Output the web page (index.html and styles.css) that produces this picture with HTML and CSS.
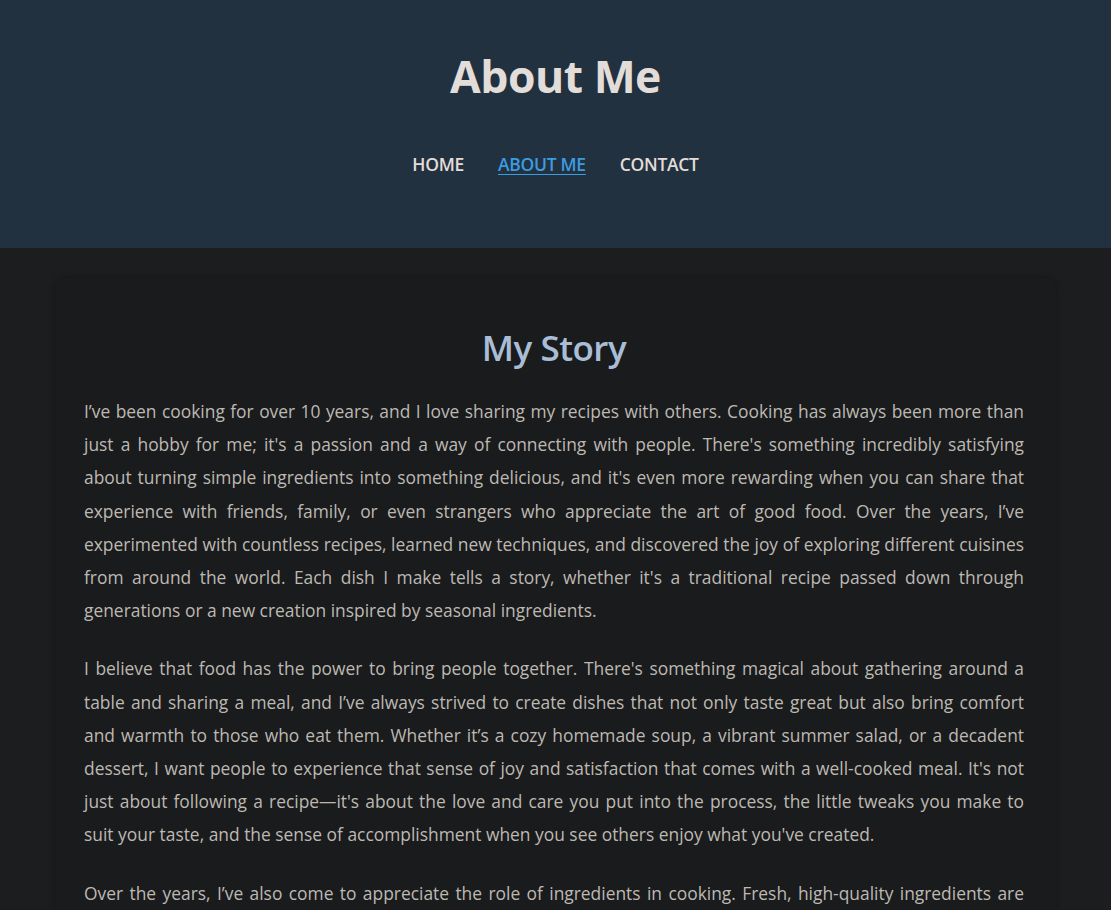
FILE: index.html
```html
<!DOCTYPE html>
<html lang="en">
<head>
<meta charset="utf-8">
<title>About Me</title>
<link rel="stylesheet" href="styles.css">
</head>
<body>
<header class="site-header">
  <h1 class="site-title">About Me</h1>
  <nav class="site-nav">
    <a href="#" class="nav-link">HOME</a>
    <a href="#" class="nav-link active">ABOUT ME</a>
    <a href="#" class="nav-link">CONTACT</a>
  </nav>
</header>
<main class="container">
  <section class="card">
    <h2 class="card-title">My Story</h2>
    <p>I’ve been cooking for over 10 years, and I love sharing my recipes with others. Cooking has always been more than just a hobby for me; it's a passion and a way of connecting with people. There's something incredibly satisfying about turning simple ingredients into something delicious, and it's even more rewarding when you can share that experience with friends, family, or even strangers who appreciate the art of good food. Over the years, I’ve experimented with countless recipes, learned new techniques, and discovered the joy of exploring different cuisines from around the world. Each dish I make tells a story, whether it's a traditional recipe passed down through generations or a new creation inspired by seasonal ingredients.</p>
    <p>I believe that food has the power to bring people together. There's something magical about gathering around a table and sharing a meal, and I’ve always strived to create dishes that not only taste great but also bring comfort and warmth to those who eat them. Whether it’s a cozy homemade soup, a vibrant summer salad, or a decadent dessert, I want people to experience that sense of joy and satisfaction that comes with a well-cooked meal. It's not just about following a recipe—it's about the love and care you put into the process, the little tweaks you make to suit your taste, and the sense of accomplishment when you see others enjoy what you've created.</p>
    <p class="wide">Over the years, I’ve also come to appreciate the role of ingredients in cooking. Fresh, high-quality ingredients are the foundation of every great dish, and I try to source them locally whenever I can. Visiting farmers' markets, talking with growers, and learning about what's in season has changed the way I plan my meals and inspired many of the recipes you'll find here.</p>
  </section>
</main>
</body>
</html>
```

FILE: styles.css
```css
* { box-sizing: border-box; }

body {
  margin: 0;
  background: #1c1d1f;
  font-family: "Open Sans", "Noto Sans", sans-serif;
  color: #bdb9b2;
}

.site-header {
  background: #22313f;
  height: 248px;
  display: flex;
  flex-direction: column;
  align-items: center;
  padding-top: 46px;
}

.site-title {
  margin: 0;
  font-size: 44.5px;
  line-height: 60px;
  font-weight: 700;
  color: #e2ddd8;
  letter-spacing: -0.5px;
}

.site-nav {
  display: flex;
  gap: 34px;
  margin-top: 46px;
}

.nav-link {
  color: #e2ddd8;
  text-decoration: none;
  font-size: 17.5px;
  font-weight: 600;
  line-height: 24px;
  letter-spacing: -0.3px;
}

.nav-link.active {
  color: #3d9be0;
  text-decoration: underline;
  text-underline-offset: 3px;
}

.container {
  max-width: 1001px;
  margin: 30px auto 0;
}

.card {
  background: #1a1b1d;
  border-radius: 10px;
  padding: 30px 32px 30px 29px;
  box-shadow: 0 0 6px rgba(0, 0, 0, 0.25);
}

.card-title {
  margin: 20px 0 27px;
  text-align: center;
  font-size: 35px;
  line-height: 40px;
  font-weight: 600;
  color: #a9bed6;
  letter-spacing: -0.5px;
}

.card p {
  margin: 0 0 25px;
  font-size: 17.4px;
  line-height: 33.2px;
  text-align: justify;
  letter-spacing: 0;
}

.card p.wide {
  word-spacing: 0.4px;
}
```
